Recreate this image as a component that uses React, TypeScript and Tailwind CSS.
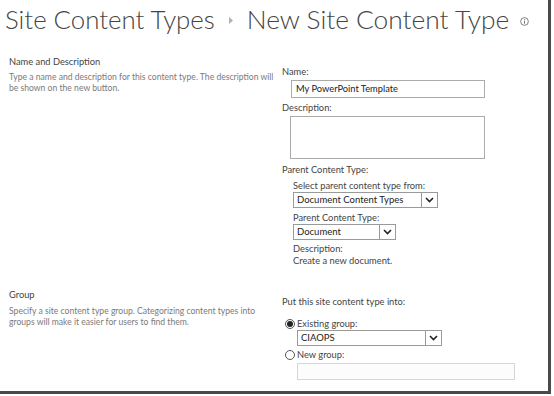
import React from "react";

function Chevron() {
  return (
    <div className="w-[16px] h-full border-l border-[#9a9a9a] flex items-center justify-center bg-white">
      <svg width="9" height="6" viewBox="0 0 9 6">
        <path d="M1 1 L4.5 4.5 L8 1" fill="none" stroke="#222" strokeWidth="1.6" />
      </svg>
    </div>
  );
}

function Select({ value, width }: { value: string; width: string }) {
  return (
    <div className={`flex h-[16px] border border-[#9a9a9a] bg-white ${width}`}>
      <div className="flex-1 px-[3px] text-[9.5px] leading-[14px] text-[#222]">{value}</div>
      <Chevron />
    </div>
  );
}

function Radio({ checked }: { checked?: boolean }) {
  return (
    <div className="w-[10px] h-[10px] rounded-full border border-[#555] flex items-center justify-center bg-white">
      {checked && <div className="w-[6px] h-[6px] rounded-full bg-[#222]" />}
    </div>
  );
}

export default function App() {
  return (
    <div className="w-[554px] h-[396px] bg-white overflow-hidden" style={{ fontFamily: 'Lato, "Liberation Sans", sans-serif' }}>
      <div className="w-[551px] h-[394px] border-r-[3px] border-b-[3px] border-[#4a4a4a] bg-white relative">
        {/* title */}
        <div className="flex items-center whitespace-nowrap pl-[5px] pt-[4px] h-[34px] text-[#444] font-light">
          <span className="text-[25.8px] leading-[32px]">Site Content Types</span>
          <svg className="mx-[14px] mt-[3px] shrink-0" width="4" height="7" viewBox="0 0 4 7">
            <path d="M0 0 L4 3.5 L0 7 Z" fill="#b0b0b0" />
          </svg>
          <span className="text-[26.3px] leading-[32px]">New Site Content Type</span>
          <svg className="ml-[11px] mt-[4px] shrink-0" width="9" height="9" viewBox="0 0 10 10">
            <circle cx="5" cy="5" r="4.3" fill="none" stroke="#666" strokeWidth="0.9" />
            <rect x="4.5" y="4.2" width="1" height="3.2" fill="#666" />
            <rect x="4.5" y="2.5" width="1" height="1" fill="#666" />
          </svg>
        </div>

        {/* Name and Description */}
        <div className="flex mt-[21px]">
          <div className="w-[282px] pl-[9px] pr-[4px]">
            <div className="text-[9.3px] leading-[14px] text-[#444]">Name and Description</div>
            <div className="mt-[3px] text-[8.6px] leading-[11px] text-[#7a7a7a]">
              Type a name and description for this content type. The description will be shown on the new button.
            </div>
          </div>
          <div className="flex-1 pt-[11px]">
            <div className="text-[9.3px] leading-[12px] text-[#444]">Name:</div>
            <div className="ml-[9px] mt-[2px] w-[194px] h-[18px] border border-[#ababab] px-[4px] text-[9.3px] leading-[16px] text-[#222]">
              My PowerPoint Template
            </div>
            <div className="mt-[3px] text-[9.3px] leading-[14px] text-[#444]">Description:</div>
            <div className="ml-[8px] mt-[1px] w-[195px] h-[43px] border border-[#ababab]" />
            <div className="mt-[4px] text-[9.3px] leading-[14px] text-[#444]">Parent Content Type:</div>
            <div className="ml-[11px] mt-[2px]">
              <div className="text-[9.3px] leading-[13px] text-[#444]">Select parent content type from:</div>
              <Select value="Document Content Types" width="w-[145px]" />
              <div className="mt-[3px] text-[9.3px] leading-[13px] text-[#444]">Parent Content Type:</div>
              <Select value="Document" width="w-[103px]" />
              <div className="mt-[3px] text-[9.3px] leading-[12px] text-[#444]">Description:</div>
              <div className="text-[9.3px] leading-[12px] text-[#444]">Create a new document.</div>
            </div>
          </div>
        </div>

        {/* Group */}
        <div className="flex mt-[21px]">
          <div className="w-[282px] pl-[9px] pr-[4px]">
            <div className="text-[9.3px] leading-[14px] text-[#444]">Group</div>
            <div className="mt-[4px] text-[8.6px] leading-[11px] text-[#7a7a7a]">
              Specify a site content type group. Categorizing content types into groups will make it easier for users to find them.
            </div>
          </div>
          <div className="flex-1 pt-[7px]">
            <div className="text-[9.3px] leading-[14px] text-[#444]">Put this site content type into:</div>
            <div className="mt-[8px] ml-[3px] flex items-center gap-[2px]">
              <Radio checked />
              <span className="text-[9.3px] leading-[13px] text-[#444]">Existing group:</span>
            </div>
            <div className="ml-[15px]">
              <Select value="CIAOPS" width="w-[145px]" />
            </div>
            <div className="mt-[2px] ml-[3px] flex items-center gap-[2px]">
              <Radio />
              <span className="text-[9.3px] leading-[13px] text-[#444]">New group:</span>
            </div>
            <div className="ml-[15px] mt-[2px] w-[218px] h-[17px] border border-[#d6d6d6] bg-[#fcfcfc]" />
          </div>
        </div>
      </div>
    </div>
  );
}
